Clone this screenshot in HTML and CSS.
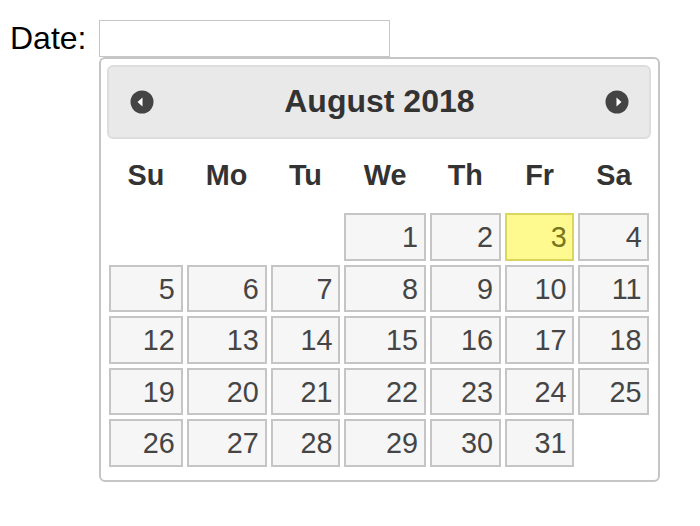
FILE: index.html
```html
<!DOCTYPE html>
<html lang="en">
<head>
  <meta charset="UTF-8">
  <meta name="viewport" content="width=device-width, initial-scale=1.0">
  <title>Datepicker</title>
  <link rel="stylesheet" href="styles.css">
</head>
<body>

  <div class="date-row">
    <label for="datepicker" class="date-label">Date:</label>
    <input type="text" id="datepicker" class="date-input">
  </div>

  <div class="datepicker">
    <div class="datepicker-header">
      <a class="datepicker-nav" title="Prev">
        <svg width="24" height="24" viewBox="0 0 24 24">
          <circle cx="12" cy="12" r="11.5" fill="#444"/>
          <polygon points="7.5,12 12.5,7.5 12.5,16.5" fill="#fff"/>
        </svg>
      </a>
      <div class="datepicker-title">August 2018</div>
      <a class="datepicker-nav" title="Next">
        <svg width="24" height="24" viewBox="0 0 24 24">
          <circle cx="12" cy="12" r="11.5" fill="#444"/>
          <polygon points="16.5,12 11.5,7.5 11.5,16.5" fill="#fff"/>
        </svg>
      </a>
    </div>

    <table class="datepicker-calendar">
      <thead>
        <tr>
          <th>Su</th><th>Mo</th><th>Tu</th><th>We</th><th>Th</th><th>Fr</th><th>Sa</th>
        </tr>
      </thead>
      <tbody id="calendar-body"></tbody>
    </table>
  </div>

  <script>
    // August 2018 starts on a Wednesday, 31 days, today = 3
    const firstDay = 3;
    const daysInMonth = 31;
    const today = 3;
    const body = document.getElementById('calendar-body');

    let day = 1 - firstDay;
    while (day <= daysInMonth) {
      const row = document.createElement('tr');
      for (let i = 0; i < 7; i++, day++) {
        const cell = document.createElement('td');
        if (day >= 1 && day <= daysInMonth) {
          const link = document.createElement('a');
          link.className = 'day' + (day === today ? ' day-today' : '');
          link.textContent = day;
          cell.appendChild(link);
        }
        row.appendChild(cell);
      }
      body.appendChild(row);
    }
  </script>

</body>
</html>
```

FILE: styles.css
```css
body {
  margin: 8px;
  font-family: "Liberation Sans", Arial, Helvetica, sans-serif;
  background-color: #fff;
  color: #000;
}

.date-row {
  display: flex;
  align-items: center;
  margin-top: 12px;
}

.date-label {
  margin-left: 2px;
  font-size: 32px;
  line-height: 37px;
}

.date-input {
  box-sizing: border-box;
  width: 291px;
  height: 37px;
  margin: 0 0 0 13px;
  padding: 2px 4px;
  border: 1px solid #c6c6c6;
  font-family: inherit;
  font-size: 26px;
}

.datepicker {
  width: 544px;
  margin: 0 0 0 91px;
  padding: 6.4px 6.4px 0;
  border: 2px solid #c5c5c5;
  border-radius: 6px;
  background-color: #fff;
  color: #333;
  font-size: 32px;
}

.datepicker-header {
  display: flex;
  align-items: center;
  padding: 6px 4px;
  border: 2px solid #ddd;
  border-radius: 6px;
  background-color: #e9e9e9;
  color: #333;
  font-weight: bold;
}

.datepicker-nav {
  display: flex;
  align-items: center;
  justify-content: center;
  width: 57.6px;
  height: 57.6px;
  cursor: pointer;
}

.datepicker-title {
  flex: 1;
  text-align: center;
  line-height: 57.6px;
}

.datepicker-calendar {
  width: 100%;
  margin: 0 0 11.5px;
  font-size: 28.8px;
  border-collapse: collapse;
}

.datepicker-calendar th {
  padding: 20.2px 8.6px;
  text-align: center;
  font-weight: bold;
  line-height: 32px;
}

.datepicker-calendar td {
  padding: 2px;
}

.day {
  display: block;
  padding: 5.76px;
  border: 2px solid #c5c5c5;
  background-color: #f6f6f6;
  color: #454545;
  text-align: right;
  line-height: 32px;
  cursor: pointer;
}

.day-today {
  border-color: #dad55e;
  background-color: #fffa90;
  color: #777620;
}
```
